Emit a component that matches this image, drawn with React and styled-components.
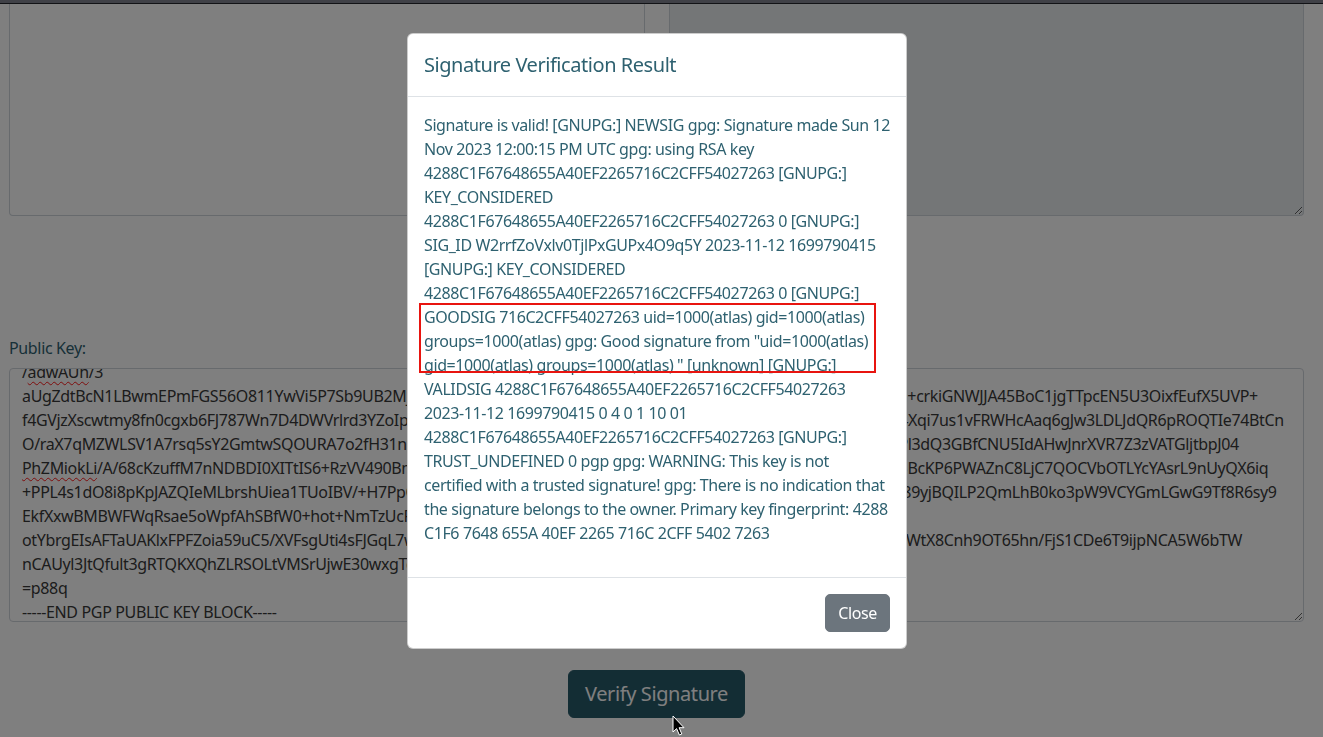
import React from 'react';
import styled, { createGlobalStyle } from 'styled-components';

const GlobalStyle = createGlobalStyle`
  html, body {
    margin: 0;
    padding: 0;
  }
  body {
    font-family: "Noto Sans", "Open Sans", sans-serif;
    background: #ffffff;
    overflow: hidden;
  }
  * {
    box-sizing: border-box;
  }
`;

const Page = styled.div`
  position: relative;
  height: 737px;
  overflow: hidden;
`;

const TopBar = styled.div`
  height: 4px;
  background: #80838f;
  border-bottom: 1px solid #24262c;
`;

const Content = styled.div`
  padding: 0 19px 0 9px;
`;

const TopRow = styled.div`
  display: grid;
  grid-template-columns: 1fr 1fr;
  column-gap: 24px;
  height: 212px;
`;

const Area = styled.textarea`
  display: block;
  width: 100%;
  height: 100%;
  margin: 0;
  padding: 6px 12px;
  font: 16px/24px "Noto Sans", sans-serif;
  color: #333;
  background: ${(p) => (p.disabled ? '#e9ecef' : '#ffffff')};
  border: 1px solid #ced4da;
  border-top: 0;
  border-radius: 0 0 4px 4px;
  resize: vertical;
  outline: none;
`;

const Label = styled.div`
  margin-top: 120px;
  margin-bottom: 8px;
  font-size: 16px;
  line-height: 24px;
  letter-spacing: -0.35px;
  color: #2e6170;
`;

const KeyBox = styled.div`
  height: 254px;
  padding: 0 12px;
  border: 1px solid #ced4da;
  border-radius: 4px;
  overflow: hidden;
  resize: vertical;
  display: flex;
  flex-direction: column;
  justify-content: flex-end;
  font-size: 16px;
  line-height: 24px;
  letter-spacing: -0.35px;
  color: #383838;
`;

const KeyLines = styled.div`
  margin-bottom: -3px;
`;

const KeyLine = styled.div`
  white-space: pre;
`;

const Misspelt = styled.span`
  text-decoration: underline wavy #ff1a1a;
  text-decoration-skip-ink: none;
  text-underline-offset: 3px;
  text-decoration-thickness: 1px;
`;

const ButtonRow = styled.div`
  display: flex;
  justify-content: center;
  margin-top: 48px;
`;

const VerifyButton = styled.button`
  font: 20px/30px "Noto Sans", sans-serif;
  letter-spacing: -0.4px;
  padding: 8px 16px;
  color: #ffffff;
  background: #275a69;
  border: 1px solid #275a69;
  border-radius: 6px;
`;

const Backdrop = styled.div`
  position: fixed;
  inset: 0;
  background: rgba(0, 0, 0, 0.5);
`;

const ModalLayer = styled.div`
  position: fixed;
  inset: 0;
  display: flex;
  justify-content: center;
  align-items: flex-start;
  padding: 33px 9px 0 0;
`;

const Modal = styled.div`
  width: 500px;
  background: #ffffff;
  border: 1px solid rgba(0, 0, 0, 0.2);
  border-radius: 6px;
  color: #2e6170;
`;

const ModalHeader = styled.div`
  padding: 16px;
  border-bottom: 1px solid #dee2e6;
`;

const ModalTitle = styled.h5`
  margin: 0;
  font-size: 20px;
  line-height: 30px;
  font-weight: 400;
  letter-spacing: -0.45px;
`;

const ModalBody = styled.div`
  position: relative;
  padding: 16px;
`;

const Result = styled.p`
  margin: 0 0 16px;
  font-size: 16px;
  line-height: 24px;
  letter-spacing: -0.4px;
`;

const ResultLine = styled.span`
  display: block;
  white-space: nowrap;
`;

const Highlight = styled.div`
  position: absolute;
  left: 11px;
  top: 206px;
  width: 457px;
  height: 70px;
  border: 2px solid #e8140f;
`;

const ModalFooter = styled.div`
  display: flex;
  justify-content: flex-end;
  padding: 12px;
  border-top: 1px solid #dee2e6;
`;

const CloseButton = styled.button`
  margin: 4px;
  padding: 6px 12px;
  font: 16px/24px "Noto Sans", sans-serif;
  letter-spacing: -0.35px;
  color: #ffffff;
  background: #6c757d;
  border: 1px solid #6c757d;
  border-radius: 5px;
`;

const Pointer = styled.svg`
  position: fixed;
  left: 672px;
  top: 715px;
`;

const resultLines = [
  'Signature is valid! [GNUPG:] NEWSIG gpg: Signature made Sun 12',
  'Nov 2023 12:00:15 PM UTC gpg: using RSA key',
  '4288C1F67648655A40EF2265716C2CFF54027263 [GNUPG:]',
  'KEY_CONSIDERED',
  '4288C1F67648655A40EF2265716C2CFF54027263 0 [GNUPG:]',
  'SIG_ID W2rrfZoVxlv0TjlPxGUPx4O9q5Y 2023-11-12 1699790415',
  '[GNUPG:] KEY_CONSIDERED',
  '4288C1F67648655A40EF2265716C2CFF54027263 0 [GNUPG:]',
  'GOODSIG 716C2CFF54027263 uid=1000(atlas) gid=1000(atlas)',
  'groups=1000(atlas) gpg: Good signature from "uid=1000(atlas)',
  'gid=1000(atlas) groups=1000(atlas) " [unknown] [GNUPG:]',
  'VALIDSIG 4288C1F67648655A40EF2265716C2CFF54027263',
  '2023-11-12 1699790415 0 4 0 1 10 01',
  '4288C1F67648655A40EF2265716C2CFF54027263 [GNUPG:]',
  'TRUST_UNDEFINED 0 pgp gpg: WARNING: This key is not',
  'certified with a trusted signature! gpg: There is no indication that',
  'the signature belongs to the owner. Primary key fingerprint: 4288',
  'C1F6 7648 655A 40EF 2265 716C 2CFF 5402 7263',
];

// each line: [text, misspelt?] segments
const keyLines = [
  [['/'], ['adwAUh', true], ['/3']],
  [['aUgZdtBcN1LBwmEPmFGS56O811YwVi5P7Sb9UB2MjQk7e2XvN0pHs4TqLz8GmWc1RbYfJ3uDa9oKiE6nS5tHw3LpX8cVn2Ga+crkiGNWJJA45BoC1jgTTpcEN5U3OixfEufX5UVP+']],
  [['f4GVjzXscwtmy8fn0cgxb6FJ787Wn7D4DWVrlrd3YZoIp2HwQe8sKx5TmN1bVc7LzR4yA9uGf3DjOiRz5bM0tWq8KeA2sYd7LNf4Xqi7us1vFRWHcAaq6gJw3LDLJdQR6pROQTIe74BtCn']],
  [['O/raX7qMZWLSV1A7rsq5sY2GmtwSQOURA7o2fH31nCk9TvBw4ZeR1pLm8QsXa6YhJ0cNuD5gF2WTc8nEo4XbJ1qZr6HyKw9Pl3dQ3GBfCNU5IdAHwJnrXVR7Z3zVATGljtbpJ04']],
  [['PhZMiokLi', true], ['/A/68cKzuffM7nNDBDI0XITtIS6+RzVV490BmP3xQa7LwYe1NhTs5KdG2vRbZc8jUo4iFWm2Rx7YdQs0Lk9Tz4NhGe5BcKP6PWAZnC8LjC7QOCVbOTLYcYAsrL9nUyQX6iq']],
  [['+PPL4s1dO8i8pKpJAZQIeMLbrshUiea1TUoIBV/+H7PpC2mWx5RkTz9aNq3YfLv1Gd6sJh0eXPq3Kv8Zr1Lc5Wy0Mb7Ts2Hn4a189yjBQILP2QmLhB0ko3pW9VCYGmLGwG9Tf8R6sy9']],
  [['EkfXxwBMBWFWqRsae5oWpfAhSBfW0+hot+NmTzUcR4qLs8VaX2yKd']],
  [['otYbrgEIsAFTaUAKlxFPFZoia59uC5/XVFsgUti4sFJGqL7w3NcRb8ZyP1kDmT6vQx0hLa4eJsVb7Nq2Rk9Xp4Zm1Cw6Ty3Hd8FcGWtX8Cnh9OT65hn/FjS1CDe6T9ijpNCA5W6bTW']],
  [['nCAUyl3JtQfult3gRTQKXQhZLRSOLtVMSrUjwE30wxgTq9']],
  [['=p88q']],
  [['-----END PGP PUBLIC KEY BLOCK-----']],
];

function PublicKey() {
  return (
    <KeyBox>
      <KeyLines>
        {keyLines.map((segments, i) => (
          <KeyLine key={i}>
            {segments.map(([text, bad], j) =>
              bad ? <Misspelt key={j}>{text}</Misspelt> : <span key={j}>{text}</span>
            )}
          </KeyLine>
        ))}
      </KeyLines>
    </KeyBox>
  );
}

const App = () => {
  return (
    <Page>
      <GlobalStyle />
      <TopBar />
      <Content>
        <TopRow>
          <Area readOnly />
          <Area disabled />
        </TopRow>
        <Label>Public Key:</Label>
        <PublicKey />
        <ButtonRow>
          <VerifyButton>Verify Signature</VerifyButton>
        </ButtonRow>
      </Content>

      <Backdrop />
      <ModalLayer>
        <Modal>
          <ModalHeader>
            <ModalTitle>Signature Verification Result</ModalTitle>
          </ModalHeader>
          <ModalBody>
            <Result>
              {resultLines.map((line, i) => (
                <ResultLine key={i}>{line}</ResultLine>
              ))}
            </Result>
            <Highlight />
          </ModalBody>
          <ModalFooter>
            <CloseButton>Close</CloseButton>
          </ModalFooter>
        </Modal>
      </ModalLayer>

      <Pointer width="14" height="22" viewBox="0 0 14 22">
        <path
          d="M1 1 L1 17 L4.6 13.6 L7.4 20 L9.8 19 L7.1 12.7 L12 12.7 Z"
          fill="#000"
          stroke="#fff"
          strokeWidth="1"
          strokeLinejoin="round"
        />
      </Pointer>
    </Page>
  );
};

export default App;
